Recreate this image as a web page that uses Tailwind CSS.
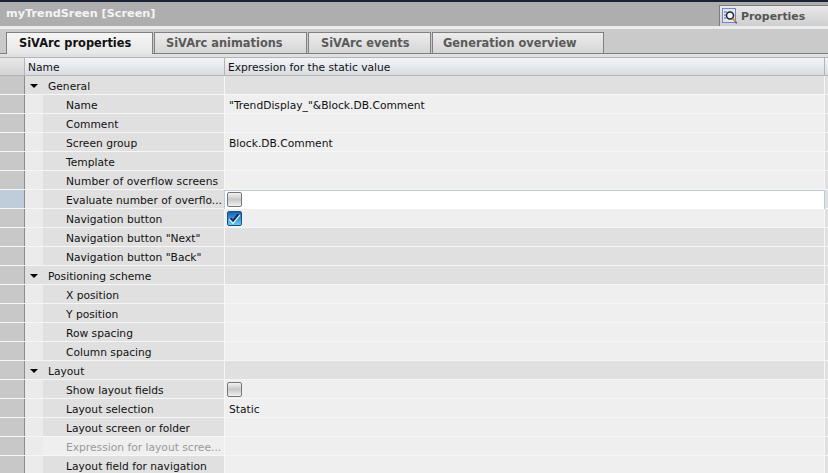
<!DOCTYPE html>
<html lang="en">

<head>
    <meta charset="UTF-8" />
    <title>myTrendSreen [Screen]</title>
    <meta name="viewport" content="width=device-width, initial-scale=1.0" />
    <script src="https://cdn.jsdelivr.net/npm/@tailwindcss/browser@4"></script>
</head>

<body class="w-[828px] h-[473px] overflow-hidden bg-[#e0e0e0] font-['DejaVu_Sans',sans-serif] text-[10.7px] text-[#111]">

    <!-- Title bar -->
    <div class="h-[2px] bg-[#1b2036]"></div>
    <div class="h-[24px] bg-[#aeaeae] flex items-end justify-between">
        <div class="pb-[3px] pl-[6px] text-[11.25px] font-bold text-[#f4f4f4]">myTrendSreen [Screen]</div>
        <div class="h-[21px] w-[109px] border-t border-l border-[#7c7c7c] bg-gradient-to-b from-[#e8e8e8] to-[#cfcfcf] flex items-center gap-[3px] pl-[2px] text-[10.9px] font-bold text-[#555]">
            <svg width="16" height="16" viewBox="0 0 16 16">
                <rect x="0.5" y="0.5" width="13" height="14" fill="#dfe6f8" stroke="#6f86c8" />
                <path d="M2 4h3M2 7h2M2 10h2" stroke="#55627f" />
                <circle cx="8" cy="7.5" r="3.5" fill="#f4f7fb" stroke="#222" stroke-width="1.5" />
                <path d="M10.5 10.5l3.5 3.5" stroke="#d9912a" stroke-width="2" />
                <path d="M13 14l2 1" stroke="#3565c0" stroke-width="1.5" />
            </svg>
            <span class="pt-[2px]">Properties</span>
        </div>
    </div>
    <div class="h-[3px] bg-[#ececec]"></div>

    <!-- Tabs -->
    <div class="h-[25px] bg-[#cacaca] border-b border-[#808080] flex items-end pl-[6px] text-[11.4px] font-bold text-[#5a5a5a]">
        <div class="h-[22px] -mb-px w-[147px] border border-b-0 border-[#808080] bg-gradient-to-b from-[#f6f6f6] to-[#e6e6e6] pl-[12px] leading-[21px] text-[#111]">SiVArc properties</div>
        <div class="h-[21px] w-[153px] ml-[1px] border border-b-0 border-[#808080] bg-gradient-to-b from-[#ececec] to-[#d6d6d6] pl-[11px] leading-[21px]">SiVArc animations</div>
        <div class="h-[21px] w-[123px] ml-[1px] border border-b-0 border-[#808080] bg-gradient-to-b from-[#ececec] to-[#d6d6d6] pl-[12px] leading-[21px]">SiVArc events</div>
        <div class="h-[21px] w-[172px] ml-[1px] border border-b-0 border-[#808080] bg-gradient-to-b from-[#ececec] to-[#d6d6d6] pl-[10px] leading-[21px]">Generation overview</div>
    </div>

    <!-- Table header -->
    <div class="mt-[3px] h-[19px] flex border-t border-b border-[#b4b4b4] bg-gradient-to-b from-[#f2f4f7] to-[#d9dde3]">
        <div class="w-[25px] border-r border-[#b4b4b4] bg-gradient-to-b from-[#e8e8e8] to-[#d4d4d4]"></div>
        <div class="w-[200px] border-r border-[#b4b4b4] pl-[3px] leading-[19px]">Name</div>
        <div class="w-[600px] border-r border-[#b4b4b4] pl-[3px] leading-[19px]">Expression for the static value</div>
    </div>

    <!-- Rows -->
    <div class="leading-[22px]">
        <div class="h-[19px] flex border-b border-[#f6f6f6]">
            <div class="w-[25px] bg-[#c8c8c8] border-r border-[#8c8c8c]"></div>
            <div class="w-[200px] border-r border-[#f6f6f6] flex items-start"><span class="mt-[8px] ml-[5px] w-0 h-0 border-x-[4px] border-x-transparent border-t-[4px] border-t-black"></span><span class="ml-[10px]">General</span></div>
            <div class="w-[600px] border-r border-[#f6f6f6]"></div>
        </div>
        <div class="h-[19px] flex border-b border-[#f6f6f6]">
            <div class="w-[25px] bg-[#c8c8c8] border-r border-[#8c8c8c]"></div>
            <div class="w-[18px] bg-[#ebebeb]"></div>
            <div class="w-[182px] border-r border-[#f6f6f6] pl-[23px]">Name</div>
            <div class="w-[600px] bg-[#efefef] border-r border-[#f6f6f6] pl-[4px]">"TrendDisplay_"&amp;Block.DB.Comment</div>
        </div>
        <div class="h-[19px] flex border-b border-[#f6f6f6]">
            <div class="w-[25px] bg-[#c8c8c8] border-r border-[#8c8c8c]"></div>
            <div class="w-[18px] bg-[#ebebeb]"></div>
            <div class="w-[182px] border-r border-[#f6f6f6] pl-[23px]">Comment</div>
            <div class="w-[600px] bg-[#efefef] border-r border-[#f6f6f6]"></div>
        </div>
        <div class="h-[19px] flex border-b border-[#f6f6f6]">
            <div class="w-[25px] bg-[#c8c8c8] border-r border-[#8c8c8c]"></div>
            <div class="w-[18px] bg-[#ebebeb]"></div>
            <div class="w-[182px] border-r border-[#f6f6f6] pl-[23px]">Screen group</div>
            <div class="w-[600px] bg-[#efefef] border-r border-[#f6f6f6] pl-[4px]">Block.DB.Comment</div>
        </div>
        <div class="h-[19px] flex border-b border-[#f6f6f6]">
            <div class="w-[25px] bg-[#c8c8c8] border-r border-[#8c8c8c]"></div>
            <div class="w-[18px] bg-[#ebebeb]"></div>
            <div class="w-[182px] border-r border-[#f6f6f6] pl-[23px]">Template</div>
            <div class="w-[600px] bg-[#efefef] border-r border-[#f6f6f6]"></div>
        </div>
        <div class="h-[19px] flex border-b border-[#f6f6f6]">
            <div class="w-[25px] bg-[#c8c8c8] border-r border-[#8c8c8c]"></div>
            <div class="w-[18px] bg-[#ebebeb]"></div>
            <div class="w-[182px] border-r border-[#f6f6f6] pl-[23px] tracking-[0.07px] whitespace-nowrap">Number of overflow screens</div>
            <div class="w-[600px] bg-[#efefef] border-r border-[#f6f6f6]"></div>
        </div>
        <!-- selected row -->
        <div class="h-[19px] flex border-b border-[#f6f6f6]">
            <div class="w-[25px] bg-[#bfcdda] border-r border-[#8c8c8c]"></div>
            <div class="w-[18px] bg-[#ebebeb]"></div>
            <div class="w-[181px] pl-[23px] whitespace-nowrap">Evaluate number of overflo...</div>
            <div class="w-[601px] h-[20px] bg-white border border-[#bccbdb] pl-[2px] pt-[1px]">
                <span class="block w-[15px] h-[15px] rounded-[2px] border border-[#777] bg-gradient-to-b from-[#f2f2f2] via-[#c8c8c8] to-[#f0f0f0]"></span>
            </div>
        </div>
        <div class="h-[19px] flex border-b border-[#f6f6f6]">
            <div class="w-[25px] bg-[#c8c8c8] border-r border-[#8c8c8c]"></div>
            <div class="w-[18px] bg-[#ebebeb]"></div>
            <div class="w-[182px] border-r border-[#f6f6f6] pl-[23px]">Navigation button</div>
            <div class="w-[600px] bg-[#efefef] border-r border-[#f6f6f6] pl-[2px] pt-[2px]">
                <span class="flex items-center justify-center w-[15px] h-[15px] rounded-[2px] border border-[#1c4f86] bg-gradient-to-b from-[#1a62b4] to-[#62cdf3]">
                    <svg width="13" height="13" viewBox="0 0 13 13"><path d="M2 6.5l3 3.2 6-7.2" fill="none" stroke="#e8f6ff" stroke-width="3.4" /><path d="M2.5 6l2.5 2.6 5.5-6.6" fill="none" stroke="#0d2c6e" stroke-width="2.2" /></svg>
                </span>
            </div>
        </div>
        <div class="h-[19px] flex border-b border-[#f6f6f6]">
            <div class="w-[25px] bg-[#c8c8c8] border-r border-[#8c8c8c]"></div>
            <div class="w-[18px] bg-[#ebebeb]"></div>
            <div class="w-[182px] border-r border-[#f6f6f6] pl-[23px]">Navigation button "Next"</div>
            <div class="w-[600px] border-r border-[#f6f6f6]"></div>
        </div>
        <div class="h-[19px] flex border-b border-[#f6f6f6]">
            <div class="w-[25px] bg-[#c8c8c8] border-r border-[#8c8c8c]"></div>
            <div class="w-[18px] bg-[#ebebeb]"></div>
            <div class="w-[182px] border-r border-[#f6f6f6] pl-[23px]">Navigation button "Back"</div>
            <div class="w-[600px] border-r border-[#f6f6f6]"></div>
        </div>
        <div class="h-[19px] flex border-b border-[#f6f6f6]">
            <div class="w-[25px] bg-[#c8c8c8] border-r border-[#8c8c8c]"></div>
            <div class="w-[200px] border-r border-[#f6f6f6] flex items-start"><span class="mt-[8px] ml-[5px] w-0 h-0 border-x-[4px] border-x-transparent border-t-[4px] border-t-black"></span><span class="ml-[10px]">Positioning scheme</span></div>
            <div class="w-[600px] border-r border-[#f6f6f6]"></div>
        </div>
        <div class="h-[19px] flex border-b border-[#f6f6f6]">
            <div class="w-[25px] bg-[#c8c8c8] border-r border-[#8c8c8c]"></div>
            <div class="w-[18px] bg-[#ebebeb]"></div>
            <div class="w-[182px] border-r border-[#f6f6f6] pl-[23px]">X position</div>
            <div class="w-[600px] bg-[#efefef] border-r border-[#f6f6f6]"></div>
        </div>
        <div class="h-[19px] flex border-b border-[#f6f6f6]">
            <div class="w-[25px] bg-[#c8c8c8] border-r border-[#8c8c8c]"></div>
            <div class="w-[18px] bg-[#ebebeb]"></div>
            <div class="w-[182px] border-r border-[#f6f6f6] pl-[23px]">Y position</div>
            <div class="w-[600px] bg-[#efefef] border-r border-[#f6f6f6]"></div>
        </div>
        <div class="h-[19px] flex border-b border-[#f6f6f6]">
            <div class="w-[25px] bg-[#c8c8c8] border-r border-[#8c8c8c]"></div>
            <div class="w-[18px] bg-[#ebebeb]"></div>
            <div class="w-[182px] border-r border-[#f6f6f6] pl-[23px]">Row spacing</div>
            <div class="w-[600px] bg-[#efefef] border-r border-[#f6f6f6]"></div>
        </div>
        <div class="h-[19px] flex border-b border-[#f6f6f6]">
            <div class="w-[25px] bg-[#c8c8c8] border-r border-[#8c8c8c]"></div>
            <div class="w-[18px] bg-[#ebebeb]"></div>
            <div class="w-[182px] border-r border-[#f6f6f6] pl-[23px]">Column spacing</div>
            <div class="w-[600px] bg-[#efefef] border-r border-[#f6f6f6]"></div>
        </div>
        <div class="h-[19px] flex border-b border-[#f6f6f6]">
            <div class="w-[25px] bg-[#c8c8c8] border-r border-[#8c8c8c]"></div>
            <div class="w-[200px] border-r border-[#f6f6f6] flex items-start"><span class="mt-[8px] ml-[5px] w-0 h-0 border-x-[4px] border-x-transparent border-t-[4px] border-t-black"></span><span class="ml-[10px]">Layout</span></div>
            <div class="w-[600px] border-r border-[#f6f6f6]"></div>
        </div>
        <div class="h-[19px] flex border-b border-[#f6f6f6]">
            <div class="w-[25px] bg-[#c8c8c8] border-r border-[#8c8c8c]"></div>
            <div class="w-[18px] bg-[#ebebeb]"></div>
            <div class="w-[182px] border-r border-[#f6f6f6] pl-[23px]">Show layout fields</div>
            <div class="w-[600px] bg-[#efefef] border-r border-[#f6f6f6] pl-[2px] pt-[2px]">
                <span class="block w-[15px] h-[15px] rounded-[2px] border border-[#777] bg-gradient-to-b from-[#f2f2f2] via-[#c8c8c8] to-[#f0f0f0]"></span>
            </div>
        </div>
        <div class="h-[19px] flex border-b border-[#f6f6f6]">
            <div class="w-[25px] bg-[#c8c8c8] border-r border-[#8c8c8c]"></div>
            <div class="w-[18px] bg-[#ebebeb]"></div>
            <div class="w-[182px] border-r border-[#f6f6f6] pl-[23px]">Layout selection</div>
            <div class="w-[600px] bg-[#efefef] border-r border-[#f6f6f6] pl-[4px]">Static</div>
        </div>
        <div class="h-[19px] flex border-b border-[#f6f6f6]">
            <div class="w-[25px] bg-[#c8c8c8] border-r border-[#8c8c8c]"></div>
            <div class="w-[18px] bg-[#ebebeb]"></div>
            <div class="w-[182px] border-r border-[#f6f6f6] pl-[23px]">Layout screen or folder</div>
            <div class="w-[600px] bg-[#efefef] border-r border-[#f6f6f6]"></div>
        </div>
        <div class="h-[19px] flex border-b border-[#f6f6f6]">
            <div class="w-[25px] bg-[#c8c8c8] border-r border-[#8c8c8c]"></div>
            <div class="w-[18px] bg-[#ebebeb]"></div>
            <div class="w-[182px] bg-[#efefef] border-r border-[#f6f6f6] pl-[23px] text-[#9a9a9a] whitespace-nowrap">Expression for layout scree...</div>
            <div class="w-[600px] bg-[#efefef] border-r border-[#f6f6f6]"></div>
        </div>
        <div class="h-[19px] flex border-b border-[#f6f6f6]">
            <div class="w-[25px] bg-[#c8c8c8] border-r border-[#8c8c8c]"></div>
            <div class="w-[18px] bg-[#ebebeb]"></div>
            <div class="w-[182px] border-r border-[#f6f6f6] pl-[23px]">Layout field for navigation</div>
            <div class="w-[600px] bg-[#efefef] border-r border-[#f6f6f6]"></div>
        </div>
    </div>
</body>

</html>
